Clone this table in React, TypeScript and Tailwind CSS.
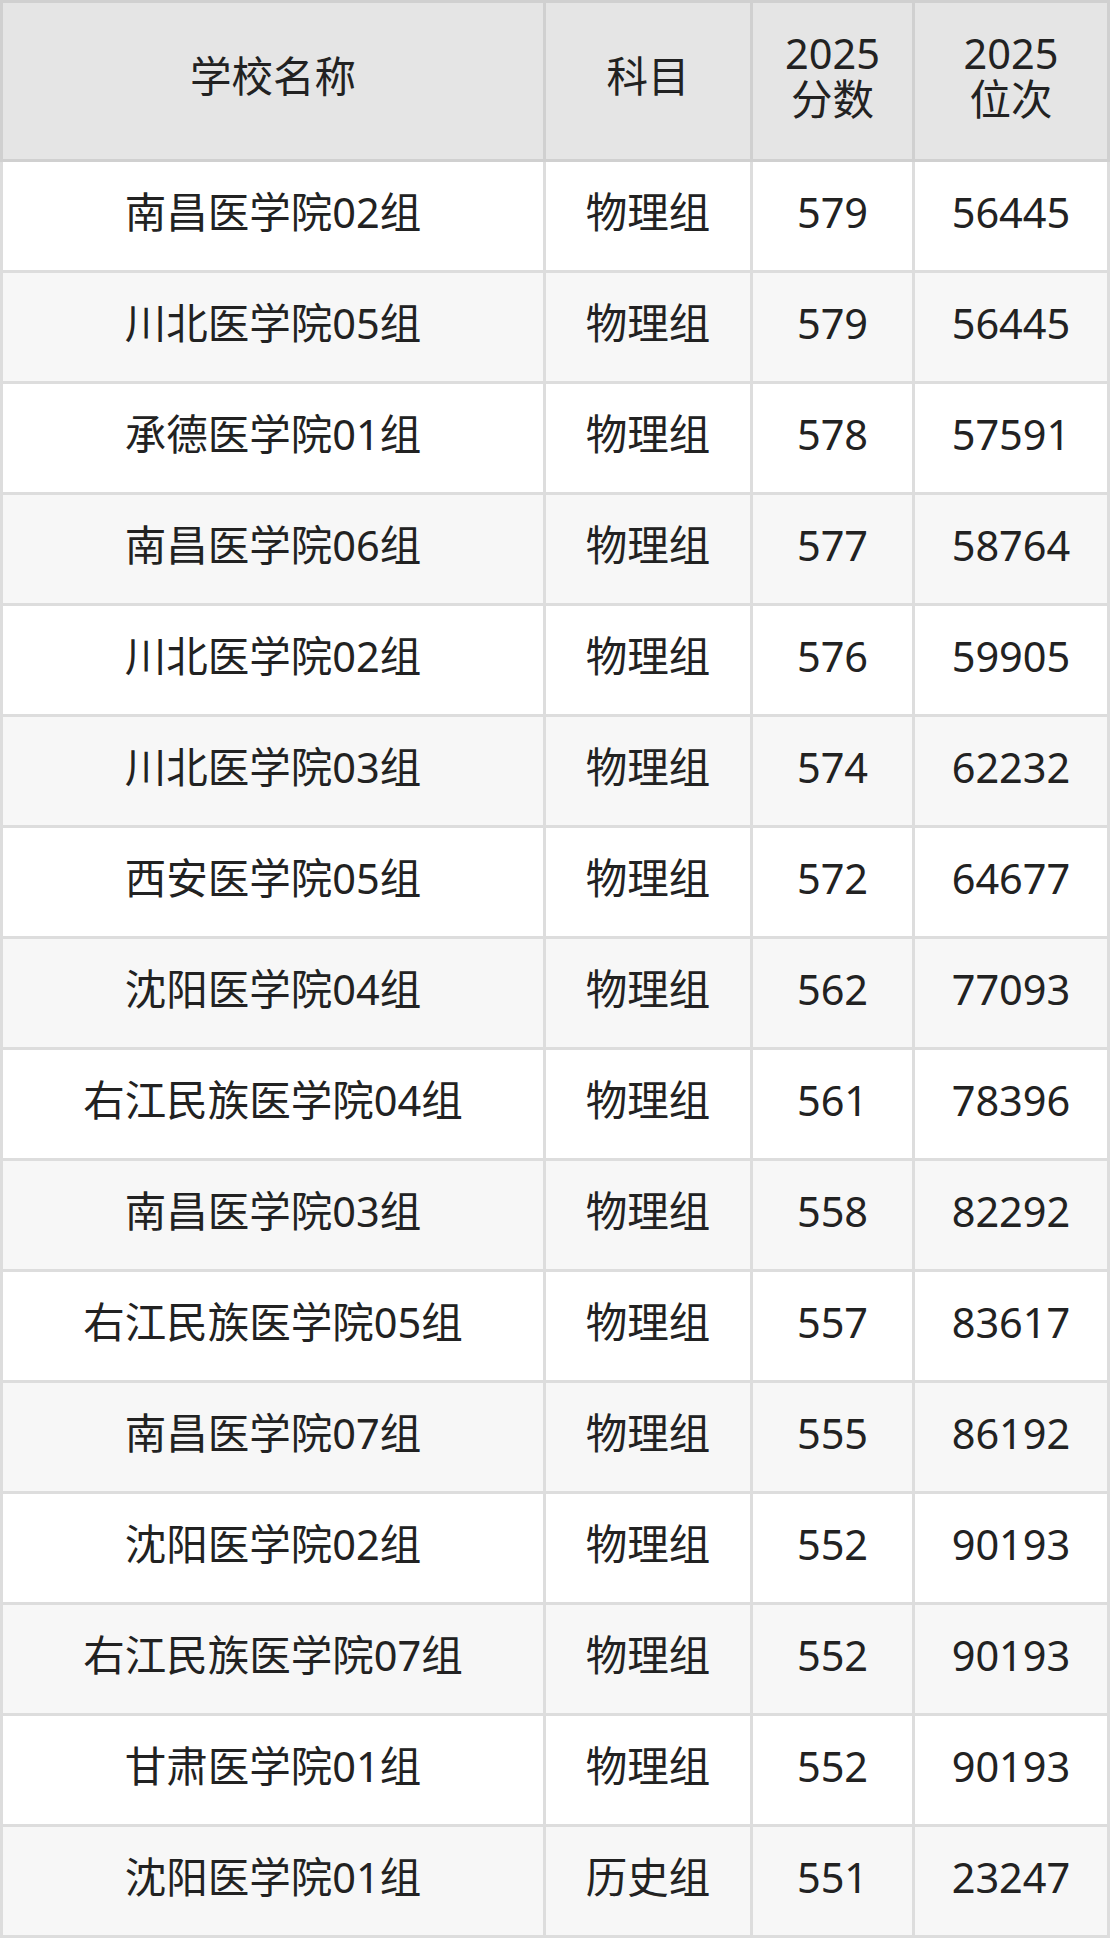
import React from "react";

const rows: [string, string, string, string][] = [
  ["南昌医学院02组", "物理组", "579", "56445"],
  ["川北医学院05组", "物理组", "579", "56445"],
  ["承德医学院01组", "物理组", "578", "57591"],
  ["南昌医学院06组", "物理组", "577", "58764"],
  ["川北医学院02组", "物理组", "576", "59905"],
  ["川北医学院03组", "物理组", "574", "62232"],
  ["西安医学院05组", "物理组", "572", "64677"],
  ["沈阳医学院04组", "物理组", "562", "77093"],
  ["右江民族医学院04组", "物理组", "561", "78396"],
  ["南昌医学院03组", "物理组", "558", "82292"],
  ["右江民族医学院05组", "物理组", "557", "83617"],
  ["南昌医学院07组", "物理组", "555", "86192"],
  ["沈阳医学院02组", "物理组", "552", "90193"],
  ["右江民族医学院07组", "物理组", "552", "90193"],
  ["甘肃医学院01组", "物理组", "552", "90193"],
  ["沈阳医学院01组", "历史组", "551", "23247"],
];

const font = {
  fontFamily: '"Noto Sans", "Noto Sans CJK SC", sans-serif',
};

export default function App() {
  return (
    <div
      className="w-[1110px] bg-white text-[#222222] text-[41.5px] leading-[1.1]"
      style={font}
    >
      <div className="border-[3px] border-[#d0d0d0] bg-[#e5e5e5]">
        <div className="grid grid-cols-[540px_204px_159px_192px] gap-x-[3px] bg-[#d0d0d0] h-[156px]">
          <div className="bg-[#e5e5e5] flex items-center justify-center pb-[8px]">学校名称</div>
          <div className="bg-[#e5e5e5] flex items-center justify-center pb-[8px]">科目</div>
          <div className="bg-[#e5e5e5] flex flex-col items-center justify-center pb-[8px]">
            <span>2025</span>
            <span>分数</span>
          </div>
          <div className="bg-[#e5e5e5] flex flex-col items-center justify-center pb-[8px]">
            <span>2025</span>
            <span>位次</span>
          </div>
        </div>
      </div>
      <div className="border-[3px] border-t-0 border-[#dddddd] bg-[#dddddd] flex flex-col gap-y-[3px]">
        {rows.map((r, i) => {
          const bg = i % 2 === 0 ? "bg-white" : "bg-[#f7f7f7]";
          return (
            <div
              key={i}
              className="grid grid-cols-[540px_204px_159px_192px] gap-x-[3px] h-[108px]"
            >
              {r.map((c, j) => (
                <div key={j} className={`${bg} flex items-center justify-center pb-[7px]`}>
                  {c}
                </div>
              ))}
            </div>
          );
        })}
      </div>
    </div>
  );
}
